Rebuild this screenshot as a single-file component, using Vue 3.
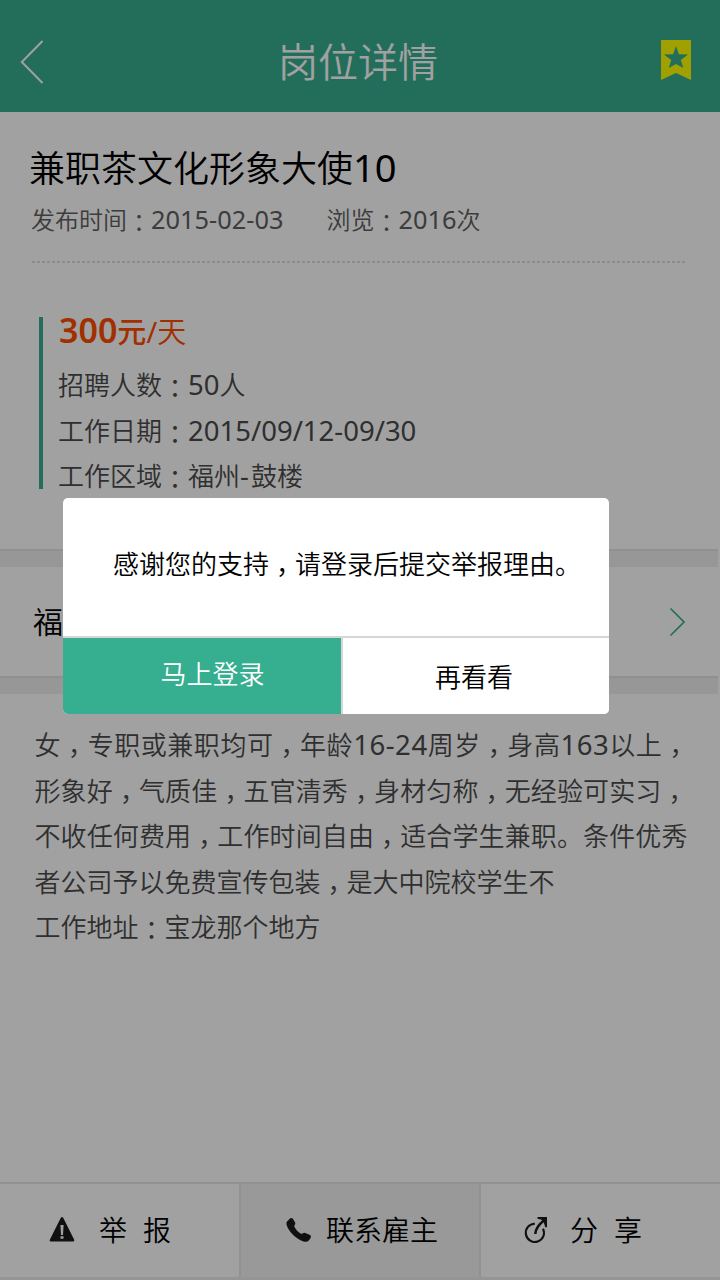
<script setup>
import { h } from 'vue'

// Splits a string into CJK, latin and full-width punctuation runs.
const Rich = (props) =>
  h(
    'span',
    { class: 'rich' },
    (props.text.match(/[\x20-\x7e]+|[，：]|[^\x20-\x7e，：]+/g) || []).map((run) => {
      if (run === '，') return h('span', { class: 'comma' }, run)
      if (run === '：') return h('span', { class: 'colon' }, run)
      return h('span', { class: /^[\x20-\x7e]/.test(run) ? 'latin' : 'cjk' }, run)
    })
  )
Rich.props = ['text']

const facts = ['招聘人数：50人', '工作日期：2015/09/12-09/30', '工作区域：福州-鼓楼']
const description = [
  '女，专职或兼职均可，年龄16-24周岁，身高163以上，',
  '形象好，气质佳，五官清秀，身材匀称，无经验可实习，',
  '不收任何费用，工作时间自由，适合学生兼职。条件优秀',
  '者公司予以免费宣传包装，是大中院校学生不',
  '工作地址：宝龙那个地方'
]
</script>

<template>
  <div class="screen">
    <header class="topbar">
      <svg class="back" width="26" height="46" viewBox="0 0 26 46">
        <path d="M23 2.5 2.8 23 23 43.5" fill="none" stroke="#fff" stroke-width="2" stroke-linecap="round" />
      </svg>
      <h1>岗位详情</h1>
      <svg class="mark" width="30" height="40" viewBox="0 0 30 40">
        <path fill="#fefe00" d="M0 0h30v40l-15-7-15 7z" />
        <path fill="#36ae90" d="M15 6l2.9 8.3 9.1.2-7.2 5.5 2.6 8-7.4-4.1L7.800 28l2.400-8L3 14.500l9.200-.2z" />
      </svg>
    </header>

    <section class="summary">
      <h2><Rich text="兼职茶文化形象大使10" /></h2>
      <div class="meta">
        <Rich text="发布时间：2015-02-03" />
        <Rich text="浏览：2016次" />
      </div>
      <div class="dashes"></div>
      <div class="facts">
        <div class="price"><b class="num">300</b><b>元</b><span class="slash">/</span><span>天</span></div>
        <div v-for="f in facts" :key="f" class="fact"><Rich :text="f" /></div>
      </div>
    </section>
    <div class="gap"></div>
    <section class="place">
      <span>福州</span>
      <svg width="18" height="30" viewBox="0 0 18 30">
        <path d="M3 2 16 15 3 28" fill="none" stroke="#36ae90" stroke-width="1.700" stroke-linecap="round" />
      </svg>
    </section>
    <div class="gap"></div>
    <section class="desc">
      <p v-for="(d, i) in description" :key="i" :class="'l' + i"><Rich :text="d" /></p>
    </section>

    <nav class="tabs">
      <div class="tab report">
        <svg width="26" height="25" viewBox="0 0 26 25">
          <path fill="#1a1a1a" d="M11.800.8q1.200-1.500 2.400 0l11 22q.5 1.700-1.200 1.700H2Q.300 24.500.800 22.800z" />
          <path fill="#fff" d="M11.400 8h3.200l-.6 10h-2zM11.500 19.300h3v2.500h-3z" />
        </svg>
        <span>举&nbsp;&nbsp;报</span>
      </div>
      <div class="tab call">
        <svg width="26" height="26" viewBox="0 0 26 26">
          <path fill="#1a1a1a" d="M1 4.500 4.300 1.300q1.500-.8 2.700.7l2.100 3.400q.7 1.300-.4 2.500-.8.9-.3 1.900c1.400 2.900 3.600 5.300 6.500 6.900q1 .4 1.900-.4 1.100-1.100 2.400-.4l4.900 2.200q1.500 1 .6 2.600l-1.700 2.500q-1.700 2.200-5.500 1.200C9.500 21.700 1.800 13.500.500 7.500q-.3-1.800.5-3z" />
        </svg>
        <span>联系雇主</span>
      </div>
      <div class="tab share">
        <svg width="26" height="28" viewBox="0 0 26 28">
          <g fill="none" stroke="#1a1a1a" stroke-width="2.100">
            <path d="M10.800 7.700A9.100 9.100 0 1 0 19 12.700" />
            <path stroke-width="2.500" d="M11.300 18Q11.800 10.500 20 4.500" />
          </g>
          <path fill="#1a1a1a" d="M13.500 1H23v10.200h-1.700L19.600 6 17 3.500l-3.500-.8z" />
        </svg>
        <span>分&nbsp;&nbsp;享</span>
      </div>
    </nav>

    <div class="overlay">
      <div class="dialog">
        <p class="message"><Rich text="感谢您的支持，请登录后提交举报理由。" /></p>
        <div class="actions">
          <button class="login">马上登录</button>
          <button class="later">再看看</button>
        </div>
      </div>
    </div>
  </div>
</template>

<style>
body { margin: 0; }
.rich { white-space: nowrap; }
.rich .latin { font-family: "Noto Sans", "Open Sans", sans-serif; font-size: 1.058em; font-weight: 400; line-height: 0; }
.rich .comma, .rich .colon { font-family: "Noto Sans CJK TC", sans-serif; line-height: 0; }
.rich .comma { vertical-align: -.3em; }
.rich .colon { vertical-align: -.12em; }
</style>

<style scoped>
.screen {
  position: relative;
  width: 720px;
  height: 1280px;
  display: flex;
  flex-direction: column;
  overflow: hidden;
  background: #fff;
  font-family: "Noto Sans CJK SC", sans-serif;
  font-weight: 350;
  color: #4b4b4b;
}
h1, h2, p { margin: 0; font-weight: 350; }
svg { display: block; flex: none; }
.topbar {
  height: 112px;
  box-sizing: border-box;
  display: grid;
  grid-template-columns: 60px 1fr 60px;
  align-items: center;
  padding: 8px 0 0;
  background: #36ae90;
  color: #fff;
}
.topbar h1 { font-size: 40px; line-height: 60px; text-align: center; padding-bottom: 1px; margin-left: -4px; }
.back { margin: 4px 0 0 19px; }
.mark { margin-left: 1px; }
.summary { height: 437px; box-sizing: border-box; padding: 31px 35px 0 29px; }
h2 { color: #000; font-size: 36px; line-height: 46px; }
.meta { display: flex; gap: 43px; margin-top: 10px; padding-left: 2px; font-size: 24px; line-height: 40px; color: #606060; }
.dashes {
  height: 2px;
  margin: 22px 0 0 3px;
  background: repeating-linear-gradient(90deg, #dcdcdc 0 3px, #fff 3px 5px);
}
.facts {
  height: 172px;
  box-sizing: border-box;
  margin: 54px 0 0 10px;
  padding-left: 15px;
  border-left: 4px solid #36ae90;
  font-size: 26px;
  line-height: 46px;
}
.price { height: 44px; line-height: 26px; padding-left: 1px; color: #ff4c00; font-size: 29px; white-space: nowrap; }
.price .num { font: 600 34px/0 "Noto Sans", sans-serif; }
.price b { font-weight: 500; }
.slash { font: 29px/0 "Noto Sans", sans-serif; }
.fact { height: 45.600px; }
.fact:last-child :deep(.latin) { letter-spacing: 2px; }
.gap { width: 718px; height: 18px; box-sizing: border-box; background: #f0f0f0; border-top: 2px solid #e4e4e4; }
.place {
  height: 109px;
  box-sizing: border-box;
  display: flex;
  align-items: center;
  justify-content: space-between;
  padding: 0 34px 0 33px;
  color: #000;
  font-size: 30px;
}
.place span { margin-top: -3px; }
.desc { flex: 1; padding: 27px 0 0 34.500px; font-size: 26px; line-height: 45.600px; letter-spacing: .12px; }
.desc .l0 { letter-spacing: .55px; }
.desc .l3, .desc .l4 { letter-spacing: 0; }
.tabs { height: 98px; box-sizing: border-box; display: flex; border-top: 2px solid #e6e6e6; border-bottom: 3px solid #ededed; color: #000; font-size: 28px; }
.tab { box-sizing: border-box; flex: none; display: flex; align-items: center; white-space: nowrap; }
.tab span { line-height: 40px; margin-top: -4px; word-spacing: 1.800px; }
.tab svg { margin-top: -2px; }
.report { width: 239px; padding-left: 49px; gap: 24px; }
.call { width: 242px; padding-left: 45px; gap: 14px; background: #f2f2f2; border: solid #e6e6e6; border-width: 0 2px; }
.share { width: 239px; padding-left: 43px; gap: 20px; }
.overlay { position: absolute; inset: 0; background: rgba(0, 0, 0, .37); }
.dialog { width: 546px; height: 216px; margin: 498px 0 0 63px; border-radius: 5px; background: #fff; overflow: hidden; color: #000; font-size: 26px; }
.message { height: 140px; box-sizing: border-box; padding: 42px 0 0 50px; line-height: 46px; border-bottom: 2px solid #d6d6d6; }
.actions { display: flex; height: 76px; }
button { border: 0; padding: 0; font: inherit; line-height: 40px; display: block; }
.login { width: 278px; background: #36ae90; color: #fff; padding: 0 0 7px 21px; }
.later { flex: 1; background: #fff; color: #000; border-left: 2px solid #d6d6d6; padding: 0 4px 1px 0; }
</style>
